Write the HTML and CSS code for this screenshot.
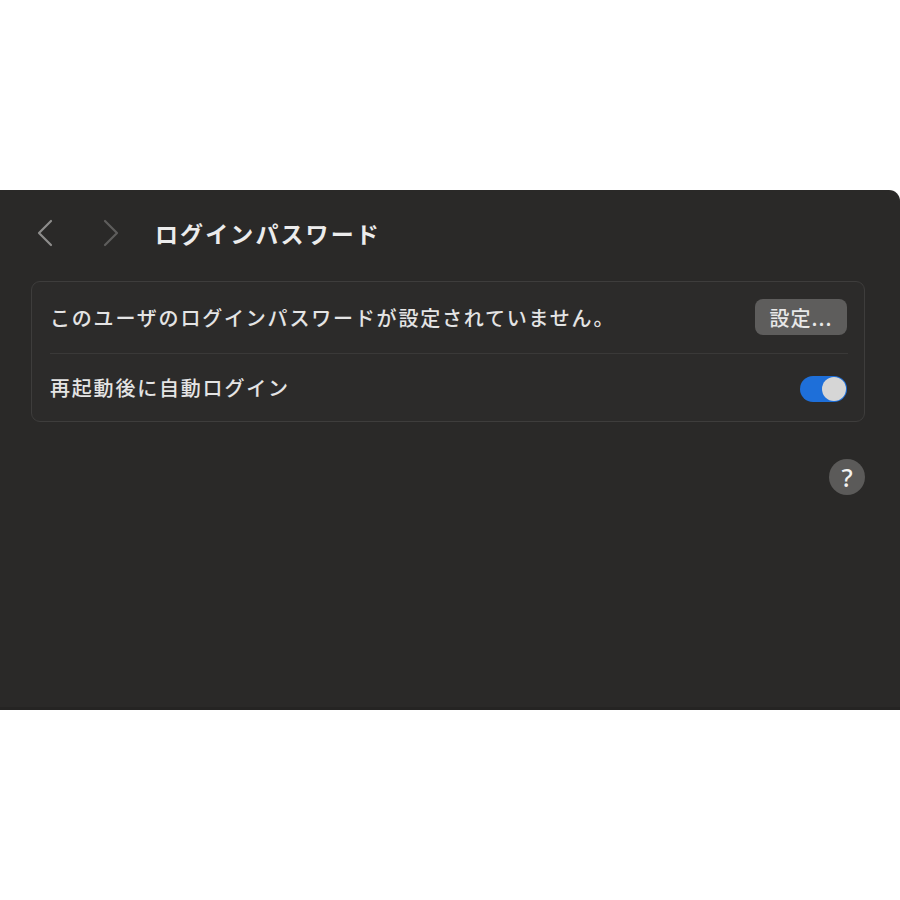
FILE: index.html
```html
<!DOCTYPE html>
<html lang="ja">
<head>
<meta charset="utf-8">
<title>ログインパスワード</title>
<link rel="stylesheet" href="styles.css">
</head>
<body>
<div class="window">
  <div class="toolbar">
    <span class="nav back">
      <svg width="18" height="28" viewBox="0 0 18 28"><path d="M15 2 L3 14 L15 26" fill="none" stroke="currentColor" stroke-width="2.2" stroke-linecap="round" stroke-linejoin="round"/></svg>
    </span>
    <span class="nav fwd">
      <svg width="18" height="28" viewBox="0 0 18 28"><path d="M3 2 L15 14 L3 26" fill="none" stroke="currentColor" stroke-width="2.2" stroke-linecap="round" stroke-linejoin="round"/></svg>
    </span>
    <h1 class="title">ログインパスワード</h1>
  </div>
  <div class="card">
    <div class="row row-first">
      <span class="label">このユーザのログインパスワードが設定されていません。</span>
      <button class="btn">設定...</button>
    </div>
    <div class="sep"></div>
    <div class="row row-second">
      <span class="label">再起動後に自動ログイン</span>
      <span class="toggle"><span class="knob"></span></span>
    </div>
  </div>
  <div class="help-row">
    <span class="help">?</span>
  </div>
</div>
</body>
</html>
```
FILE: styles.css
```css
html, body {
  margin: 0;
  padding: 0;
  background: #ffffff;
}
body {
  font-family: "Noto Sans CJK JP", "Noto Sans", sans-serif;
}
.window {
  margin-top: 190px;
  height: 520px;
  box-sizing: border-box;
  background: #2a2928;
  border-top-right-radius: 11px;
  padding: 0 35px 0 31px;
  border-bottom: 3px solid #252423;
}
.toolbar {
  height: 86px;
  display: flex;
  align-items: center;
}
.nav {
  display: flex;
  width: 18px;
  height: 28px;
}
.back {
  margin-left: 5px;
  color: #8d8c8b;
}
.fwd {
  margin-left: 48px;
  color: #5e5d5c;
}
.title {
  margin: 0 0 0 35px;
  font-size: 23px;
  font-weight: 700;
  letter-spacing: 2.1px;
  color: #ececec;
}
.card {
  margin-top: 5px;
  border: 1px solid #3e3d3c;
  border-radius: 9px;
  background: #2c2b2a;
}
.row {
  display: flex;
  align-items: center;
  justify-content: space-between;
  padding: 0 17px 0 18px;
}
.row-first {
  height: 71px;
}
.row-second {
  height: 67px;
}
.label {
  font-size: 20px;
  font-weight: 500;
  letter-spacing: 1.8px;
  color: #e4e4e4;
}
.sep {
  height: 1px;
  margin: 0 16px 0 18px;
  background: #3a3938;
}
.btn {
  width: 92px;
  height: 36px;
  border: none;
  border-radius: 8px;
  background: #5e5d5c;
  color: #e8e8e8;
  font-family: "Noto Sans CJK JP", "Noto Sans", sans-serif;
  font-size: 20px;
  font-weight: 500;
  letter-spacing: 1px;
  padding: 0;
  margin-top: -1px;
}
.toggle {
  width: 47px;
  height: 26px;
  border-radius: 13px;
  background: #1e6fd9;
  display: flex;
  align-items: center;
  justify-content: flex-end;
  padding: 0 1px;
  box-sizing: border-box;
  margin-top: 3px;
}
.knob {
  width: 24px;
  height: 24px;
  border-radius: 50%;
  background: #d6d6d6;
}
.help-row {
  display: flex;
  justify-content: flex-end;
  margin-top: 37px;
}
.help {
  width: 36px;
  height: 36px;
  border-radius: 50%;
  background: #5b5a59;
  color: #f2f2f2;
  font-family: "Noto Sans", sans-serif;
  font-size: 25px;
  font-weight: 500;
  display: flex;
  align-items: center;
  justify-content: center;
}
```
